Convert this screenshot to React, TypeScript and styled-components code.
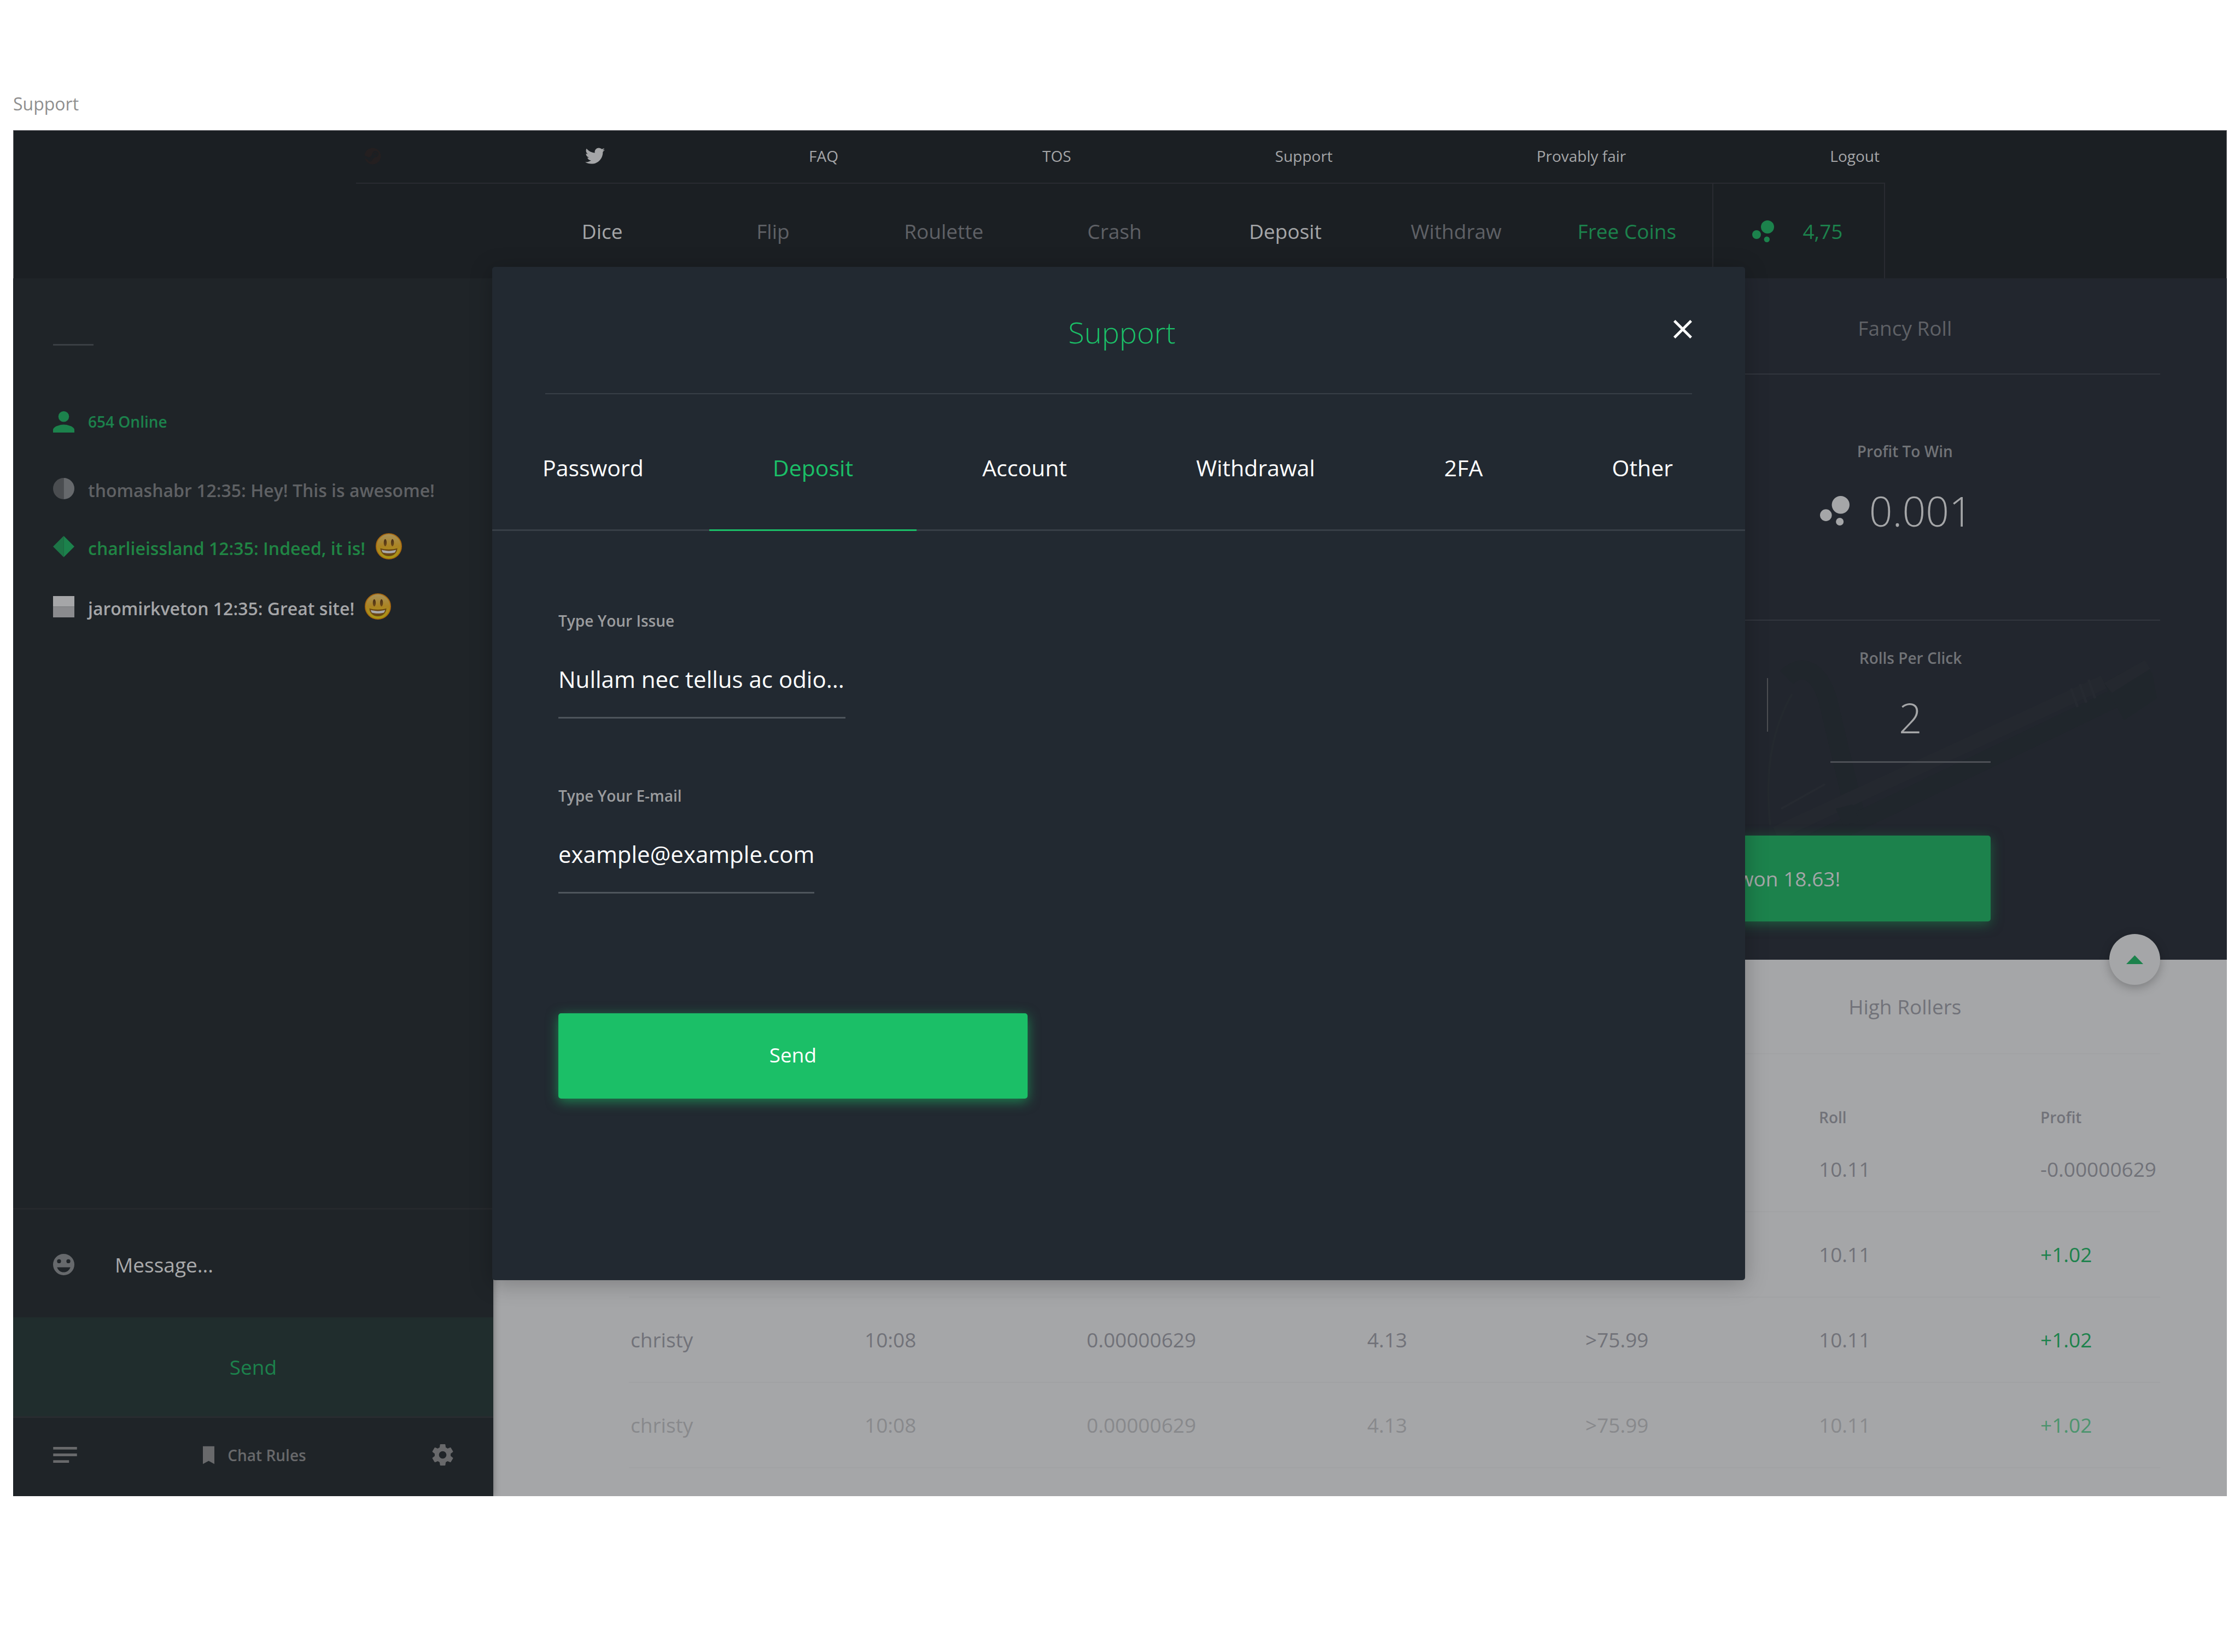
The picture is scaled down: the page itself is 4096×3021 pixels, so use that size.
import React from 'react';
import styled, { createGlobalStyle, css } from 'styled-components';
import { FaSteam, FaTwitter } from 'react-icons/fa';

const color = {
  header: '#1b1f23',
  sidebar: '#1f2428',
  panel: '#22262e',
  light: '#a5a6a8',
  modal: '#222931',
  green: '#1bbf67',
  greenDim: '#1c824c',
  text: '#a5a6a8',
  muted: '#5f6166',
  label: '#717377',
  ink: '#717279',
  line: '#292b31',
  panelLine: '#32363e',
  modalLine: '#383f47',
};

const GlobalStyle = createGlobalStyle`
  *, *::before, *::after { box-sizing: border-box; }
  body {
    margin: 0;
    background: #ffffff;
    font-family: "Open Sans", "Noto Sans", sans-serif;
    font-size: 37px;
    line-height: 50px;
  }
  button, input {
    font: inherit;
    color: inherit;
    margin: 0;
    padding: 0;
    border: 0;
    background: none;
    outline: none;
  }
  button { cursor: pointer; }
  a { color: inherit; text-decoration: none; }
  svg { display: block; flex: none; }
`;

const smallStrong = css`
  font-size: 28px;
  line-height: 36px;
  font-weight: 600;
`;

const Page = styled.div`
  min-height: 100vh;
  padding: 168px 24px 24px;
`;

const PageLabel = styled.p`
  margin: 0 0 26px;
  font-size: 32px;
  line-height: 44px;
  color: #8f8f8f;
`;

const Frame = styled.div`
  position: relative;
  outline: 1px solid #646569;
  outline-offset: -1px;
  background: ${color.light};
`;

/* Header */

const Header = styled.header`
  padding: 0 625px 0 627px;
  background: ${color.header};
`;

const TopLinks = styled.nav`
  display: flex;
  align-items: center;
  justify-content: space-between;
  height: 98px;
  padding: 0 10px 2px 15px;
  border-bottom: 2px solid ${color.line};
  font-size: 28px;
  line-height: 36px;
  color: ${color.text};
`;

const SteamLink = styled.a`
  color: #241f20;
`;

const NavRow = styled.div`
  display: flex;
  height: 173px;
`;

const MainNav = styled.nav`
  flex: 1;
  display: grid;
  grid-template-columns: repeat(7, 1fr);
  align-items: center;
  justify-items: center;
  padding-left: 294px;
`;

const NavLink = styled.a<{ $tone?: 'bright' | 'green' }>`
  color: ${(p) => (p.$tone === 'bright' ? color.text : p.$tone === 'green' ? color.greenDim : color.muted)};
`;

const Balance = styled.div`
  display: flex;
  align-items: center;
  justify-content: center;
  gap: 52px;
  width: 316px;
  padding-right: 4px;
  border: solid ${color.line};
  border-width: 0 2px;
  color: ${color.greenDim};
`;

const Body = styled.div`
  display: flex;
`;

/* Chat */

const Sidebar = styled.aside`
  position: relative;
  z-index: 1;
  flex: none;
  display: flex;
  flex-direction: column;
  width: 878px;
  background: ${color.sidebar};
  box-shadow: 0 0 12px rgba(0, 0, 0, 0.35);
  clip-path: inset(0 -16px 0 0);
`;

const Chat = styled.div`
  flex: 1;
  padding: 120px 73px 0;
`;

const ChatMark = styled.hr`
  width: 74px;
  height: 3px;
  margin: 0 0 119px;
  border: 0;
  background: #3a3f44;
`;

const Online = styled.p`
  ${smallStrong}
  display: flex;
  align-items: center;
  gap: 25px;
  height: 40px;
  margin: 0;
  color: ${color.greenDim};
`;

const Messages = styled.ul`
  display: flex;
  flex-direction: column;
  gap: 62px;
  margin: 0;
  padding: 82px 0 0;
  list-style: none;
`;

const Message = styled.li<{ $color: string }>`
  display: flex;
  align-items: center;
  gap: 19px;
  font-size: 32px;
  line-height: 32px;
  font-weight: 600;
  color: ${(p) => p.$color};
  white-space: nowrap;
`;

const MessageText = styled.span`
  padding: 8px 0 0 6px;
`;

const Compose = styled.div`
  display: flex;
  align-items: center;
  gap: 74px;
  height: 200px;
  padding: 4px 73px 0;
  border-top: 3px solid #26292d;
  color: #66696c;
`;

const ComposeInput = styled.input`
  flex: 1;
  min-width: 0;
  color: #a9aaab;
  &::placeholder {
    color: #a9aaab;
    opacity: 1;
  }
`;

const ChatSend = styled.button`
  height: 184px;
  border-bottom: 3px solid #292c30;
  background: #202d2d;
  color: ${color.greenDim};
`;

const ChatFooter = styled.div`
  display: flex;
  align-items: center;
  justify-content: space-between;
  height: 143px;
  padding: 0 73px 8px;
  color: #68696b;
`;

const RulesLink = styled.a`
  ${smallStrong}
  display: flex;
  align-items: center;
  gap: 24px;
`;

/* Dice panel */

const Main = styled.main`
  flex: 1;
  min-width: 0;
`;

const Panel = styled.section`
  position: relative;
  padding: 0 122px 70px 248px;
  background: ${color.panel};
`;

const Artwork = styled.svg`
  position: absolute;
  right: 85px;
  bottom: 96px;
`;

const ThirdsRow = styled.div`
  position: relative;
  display: grid;
  grid-template-columns: repeat(3, 1fr);
  border-bottom: 2px solid ${color.panelLine};
`;

const ModeTab = styled.button`
  grid-column: 3;
  height: 174px;
  padding-top: 8px;
  color: ${color.muted};
`;

const Stat = styled.div`
  grid-column: 3;
  display: flex;
  flex-direction: column;
  align-items: center;
  gap: 41px;
  height: 448px;
  padding-top: 122px;
`;

const StatLabel = styled.label`
  ${smallStrong}
  color: ${color.label};
`;

const StatTitle = styled.span`
  ${smallStrong}
  color: ${color.label};
`;

const bigNumber = css`
  font-size: 75px;
  line-height: 100px;
  font-weight: 300;
  color: ${color.text};
`;

const StatValue = styled.div`
  ${bigNumber}
  display: flex;
  align-items: center;
  gap: 36px;
  padding-right: 32px;
`;

const Controls = styled.div`
  position: relative;
  display: flex;
  flex-direction: column;
  align-items: flex-end;
  gap: 133px;
  padding-right: 310px;
`;

const RollsRow = styled.div`
  display: flex;
  gap: 114px;
`;

const Divider = styled.div`
  width: 2px;
  height: 98px;
  margin-top: 105px;
  background: #4d4f53;
`;

const RollsField = styled.div`
  display: flex;
  flex-direction: column;
  align-items: center;
  gap: 41px;
  width: 293px;
  padding-top: 50px;
`;

const RollsInput = styled.input`
  ${bigNumber}
  width: 100%;
  height: 133px;
  padding-bottom: 30px;
  border-bottom: 3px solid #4c4f55;
  text-align: center;
`;

const ResultButton = styled.button`
  width: 812px;
  height: 157px;
  border-radius: 5px;
  background: ${color.greenDim};
  box-shadow: 0 5px 22px rgba(28, 130, 76, 0.6);
  color: ${color.text};
`;

/* Results */

const Results = styled.section`
  position: relative;
  padding: 0 122px 51px 248px;
  background: ${color.light};
`;

const ResultsTabs = styled.div`
  display: grid;
  grid-template-columns: repeat(3, 1fr);
  border-bottom: 2px solid #a1a2a4;
`;

const ResultsTab = styled.button`
  grid-column: 3;
  height: 171px;
  color: ${color.ink};
`;

const ScrollTop = styled.button`
  position: absolute;
  top: -47px;
  right: 122px;
  display: grid;
  place-items: center;
  width: 93px;
  height: 93px;
  border-radius: 50%;
  background: ${color.light};
  box-shadow: 0 5px 18px rgba(0, 0, 0, 0.25);
  color: ${color.greenDim};
`;

const Table = styled.table`
  width: 100%;
  border-collapse: separate;
  border-spacing: 0;
  table-layout: fixed;
  color: ${color.ink};
`;

const Th = styled.th`
  ${smallStrong}
  height: 133px;
  padding: 0 0 0 3px;
  text-align: left;
  vertical-align: bottom;
`;

const Row = styled.tr<{ $faded?: boolean }>`
  color: ${(p) => (p.$faded ? '#88898c' : 'inherit')};
`;

const Td = styled.td<{ $win?: boolean; $faded?: boolean }>`
  height: 156px;
  padding: 0 0 0 3px;
  border-bottom: 2px solid #a1a2a4;
  white-space: nowrap;
  ${(p) => p.$win && `color: ${p.$faded ? '#4d946e' : color.greenDim};`}
`;

/* Support dialog */

const Dialog = styled.div`
  position: absolute;
  z-index: 2;
  top: 250px;
  left: 876px;
  right: 881px;
  border-radius: 5px;
  background: ${color.modal};
  box-shadow: 0 6px 40px rgba(0, 0, 0, 0.25);
  color: #ffffff;
`;

const DialogHeader = styled.div`
  position: relative;
  display: flex;
  align-items: center;
  justify-content: center;
  height: 233px;
  margin: 0 97px;
  padding: 6px 0 0 12px;
  border-bottom: 2px solid ${color.modalLine};
`;

const DialogTitle = styled.h2`
  margin: 0;
  font-size: 54px;
  line-height: 72px;
  font-weight: 300;
  color: ${color.green};
`;

const CloseButton = styled.button`
  position: absolute;
  top: 97px;
  right: 0;
`;

const Tabs = styled.div`
  display: flex;
  justify-content: space-between;
  height: 250px;
  padding: 0 132px 0 92px;
  border-bottom: 3px solid ${color.modalLine};
  font-size: 41px;
`;

const Tab = styled.button<{ $active?: boolean }>`
  position: relative;
  padding-top: 20px;
  ${(p) =>
    p.$active &&
    css`
      color: ${color.green};
      &::after {
        content: '';
        position: absolute;
        left: -116px;
        right: -116px;
        bottom: -3px;
        height: 3px;
        background: ${color.green};
      }
    `}
`;

const Form = styled.form`
  display: flex;
  flex-direction: column;
  align-items: flex-start;
  gap: 123px;
  padding: 146px 121px 332px;
`;

const Field = styled.div`
  display: flex;
  flex-direction: column;
  gap: 19px;
`;

const FieldLabel = styled.label`
  ${smallStrong}
  color: #9b9c9e;
`;

const FieldInput = styled.input<{ $width: number }>`
  width: ${(p) => p.$width}px;
  height: 142px;
  border-bottom: 3px solid #4e555c;
  font-size: 42px;
`;

const SubmitButton = styled.button`
  width: 858px;
  height: 156px;
  margin-top: 96px;
  padding-bottom: 4px;
  border-radius: 5px;
  background: ${color.green};
  box-shadow: 0 5px 22px rgba(27, 191, 103, 0.6);
`;

/* Drawings */

const Bubbles = ({ size }: { size: number }) => (
  <svg width={size} height={size} viewBox="0 0 100 100" fill="currentColor" aria-hidden>
    <circle cx="70" cy="30" r="30" />
    <circle cx="20" cy="65" r="20" />
    <circle cx="67" cy="87" r="13" />
  </svg>
);

const PersonIcon = () => (
  <svg width="39" height="39" viewBox="0 0 64 64" fill="currentColor" aria-hidden>
    <circle cx="32" cy="16" r="16" />
    <path d="M0 64V56C0 45.400 21.300 40 32 40s32 5.400 32 16v8z" />
  </svg>
);

const HalfCircle = () => (
  <svg width="39" height="39" viewBox="0 0 64 64" aria-hidden>
    <path d="M32 0a32 32 0 0 0 0 64z" fill="#4a4d50" />
    <path d="M32 0a32 32 0 0 1 0 64z" fill="#66696c" />
  </svg>
);

const Diamond = () => (
  <svg width="39" height="39" viewBox="0 0 64 64" aria-hidden>
    <path d="M32 0L0 32l32 32z" fill="#1d7446" />
    <path d="M32 0l32 32-32 32z" fill="#1c824c" />
  </svg>
);

const Square = () => (
  <svg width="39" height="39" viewBox="0 0 64 64" aria-hidden>
    <path d="M0 0h64v32H0z" fill="#a5a6a8" />
    <path d="M0 32h64v32H0z" fill="#8a8b8e" />
  </svg>
);

const Emoji = () => (
  <svg width="48" height="48" viewBox="0 0 80 80" aria-hidden>
    <defs>
      <linearGradient id="face" x1="0" y1="0" x2="0" y2="1">
        <stop offset="0" stopColor="#a8925a" />
        <stop offset="0.5" stopColor="#ab8322" />
        <stop offset="1" stopColor="#a89a14" />
      </linearGradient>
      <linearGradient id="eye" x1="0" y1="0" x2="0" y2="1">
        <stop offset="0" stopColor="#4a3018" />
        <stop offset="1" stopColor="#6e4a17" />
      </linearGradient>
    </defs>
    <circle cx="40" cy="40" r="38.500" fill="url(#face)" stroke="#a8680f" strokeWidth="3" />
    <ellipse cx="29" cy="29" rx="4.500" ry="11" fill="url(#eye)" />
    <ellipse cx="51" cy="29" rx="4.500" ry="11" fill="url(#eye)" />
    <path d="M14 46c16 5 36 5 52 0-1 15-11 24-26 24S15 61 14 46z" fill="#6b4714" />
    <path d="M18 51c14 4 30 4 44 0-1 4-2 6-4 8-11 3-25 3-36 0-2-2-3-4-4-8z" fill="#a9a9aa" />
  </svg>
);

const SmileIcon = () => (
  <svg width="39" height="39" viewBox="0 0 64 64" fill="currentColor" aria-hidden>
    <path
      fillRule="evenodd"
      d="M32 0a32 32 0 1 1 0 64 32 32 0 0 1 0-64zM18 16a6 6 0 1 0 0 12 6 6 0 0 0 0-12zm28 0a6 6 0 1 0 0 12 6 6 0 0 0 0-12zM12 40c3 9 11 15 20 15s17-6 20-15z"
    />
  </svg>
);

const MenuIcon = () => (
  <svg width="44" height="29" viewBox="0 0 72 48" fill="currentColor" aria-hidden>
    <path d="M0 0h72v8H0zM0 20h72v8H0zM0 40h48v8H0z" />
  </svg>
);

const BookmarkIcon = () => (
  <svg width="21" height="34" viewBox="0 0 36 56" fill="currentColor" aria-hidden>
    <path d="M0 0h36v56L18 46 0 56z" />
  </svg>
);

const GearIcon = () => (
  <svg width="39" height="39" viewBox="2 2 20 20" fill="currentColor" aria-hidden>
    <path d="M19.430 12.980c.04-.32.07-.64.07-.98s-.03-.66-.07-.98l2.110-1.650c.19-.15.24-.42.12-.64l-2-3.460c-.12-.22-.39-.3-.61-.22l-2.490 1c-.52-.4-1.080-.73-1.690-.98l-.38-2.650C14.460 2.180 14.250 2 14 2h-4c-.25 0-.46.18-.49.42l-.38 2.650c-.61.25-1.170.59-1.690.98l-2.490-1c-.23-.09-.49 0-.61.22l-2 3.460c-.13.22-.07.49.12.64l2.110 1.650c-.04.32-.07.65-.07.98s.03.66.07.98l-2.110 1.650c-.19.15-.24.42-.12.64l2 3.460c.12.22.39.3.61.22l2.490-1c.52.4 1.080.73 1.690.98l.38 2.650c.03.24.24.42.49.42h4c.25 0 .46-.18.49-.42l.38-2.650c.61-.25 1.170-.59 1.690-.98l2.490 1c.23.09.49 0 .61-.22l2-3.460c.12-.22.07-.49-.12-.64l-2.110-1.650zM12 15.500c-1.930 0-3.500-1.570-3.500-3.500s1.570-3.500 3.500-3.500 3.500 1.570 3.500 3.500-1.570 3.500-3.500 3.500z" />
  </svg>
);

const CloseIcon = () => (
  <svg width="34" height="34" viewBox="0 0 56 56" fill="currentColor" aria-hidden>
    <path d="M56 5.600L50.400 0 28 22.400 5.600 0 0 5.600 22.400 28 0 50.400 5.600 56 28 33.600 50.400 56 56 50.400 33.600 28z" />
  </svg>
);

const ArrowUp = () => (
  <svg width="31" height="16" viewBox="0 0 31 16" fill="currentColor" aria-hidden>
    <path d="M15.500 0L31 16H0z" />
  </svg>
);

const Sword = () => (
  <Artwork width="780" height="480" viewBox="0 0 780 480" fill="none" aria-hidden>
    <path d="M60 60c30-30 60-10 75 40l55 230" stroke="#20262c" strokeWidth="34" />
    <path d="M30 330c-10-90 0-170 40-240" stroke="#24292f" strokeWidth="4" />
    <path d="M50 300l80-45" stroke="#262a31" strokeWidth="4" />
    <path d="M40 345L640 68" stroke="#24282f" strokeWidth="26" />
    <path d="M60 385L660 98" stroke="#20262c" strokeWidth="34" />
    <path d="M640 70l75-42 14 26 8 44-60 40z" fill="#20262c" />
    <path d="M640 70l75-42 10 16-70 44z" fill="#24282f" />
    <path d="M150 300l30-8 14 30-30 10zM170 380l60-10 12 40-40 34-36-10z" fill="#20262c" />
    <path d="M580 80l12 34M596 72l12 34M612 64l12 34" stroke="#262a31" strokeWidth="5" />
  </Artwork>
);

const columns = [
  { title: 'User', width: 428 },
  { title: 'Time', width: 406 },
  { title: 'Bet', width: 513 },
  { title: 'Multiplier', width: 399 },
  { title: 'Game', width: 427 },
  { title: 'Roll', width: 405 },
  { title: 'Profit', width: 222 },
];

const rows = [
  { profit: '-0.00000629' },
  { profit: '+1.02' },
  { profit: '+1.02' },
  { profit: '+1.02', faded: true },
];

const tabs = ['Password', 'Deposit', 'Account', 'Withdrawal', '2FA', 'Other'];

export default function App() {
  return (
    <>
      <GlobalStyle />
      <Page>
        <PageLabel>Support</PageLabel>
        <Frame>
          <Header>
            <TopLinks>
              <SteamLink href="#" aria-label="Steam">
                <FaSteam size={31} />
              </SteamLink>
              <a href="#" aria-label="Twitter">
                <FaTwitter size={36} />
              </a>
              <a href="#">FAQ</a>
              <a href="#">TOS</a>
              <a href="#">Support</a>
              <a href="#">Provably fair</a>
              <a href="#">Logout</a>
            </TopLinks>
            <NavRow>
              <MainNav>
                <NavLink href="#" $tone="bright">Dice</NavLink>
                <NavLink href="#">Flip</NavLink>
                <NavLink href="#">Roulette</NavLink>
                <NavLink href="#">Crash</NavLink>
                <NavLink href="#" $tone="bright">Deposit</NavLink>
                <NavLink href="#">Withdraw</NavLink>
                <NavLink href="#" $tone="green">Free Coins</NavLink>
              </MainNav>
              <Balance>
                <Bubbles size={40} />
                <span>4,75</span>
              </Balance>
            </NavRow>
          </Header>

          <Body>
            <Sidebar>
              <Chat>
                <ChatMark />
                <Online>
                  <PersonIcon />
                  654 Online
                </Online>
                <Messages>
                  <Message $color="#5f6164">
                    <HalfCircle />
                    <MessageText>thomashabr 12:35: Hey! This is awesome!</MessageText>
                  </Message>
                  <Message $color="#208544">
                    <Diamond />
                    <MessageText>charlieissland 12:35: Indeed, it is!</MessageText>
                    <Emoji />
                  </Message>
                  <Message $color={color.text}>
                    <Square />
                    <MessageText>jaromirkveton 12:35: Great site!</MessageText>
                    <Emoji />
                  </Message>
                </Messages>
              </Chat>
              <Compose>
                <SmileIcon />
                <ComposeInput aria-label="Message" placeholder="Message..." />
              </Compose>
              <ChatSend type="button">Send</ChatSend>
              <ChatFooter>
                <button type="button" aria-label="Menu">
                  <MenuIcon />
                </button>
                <RulesLink href="#">
                  <BookmarkIcon />
                  Chat Rules
                </RulesLink>
                <button type="button" aria-label="Settings">
                  <GearIcon />
                </button>
              </ChatFooter>
            </Sidebar>

            <Main>
              <Panel>
                <Sword />
                <ThirdsRow>
                  <ModeTab type="button">Fancy Roll</ModeTab>
                </ThirdsRow>
                <ThirdsRow>
                  <Stat>
                    <StatTitle>Profit To Win</StatTitle>
                    <StatValue>
                      <Bubbles size={54} />
                      <span>0.001</span>
                    </StatValue>
                  </Stat>
                </ThirdsRow>
                <Controls>
                  <RollsRow>
                    <Divider />
                    <RollsField>
                      <StatLabel htmlFor="rolls">Rolls Per Click</StatLabel>
                      <RollsInput id="rolls" defaultValue="2" />
                    </RollsField>
                  </RollsRow>
                  <ResultButton type="button">You won 18.63!</ResultButton>
                </Controls>
              </Panel>

              <Results>
                <ScrollTop type="button" aria-label="Collapse">
                  <ArrowUp />
                </ScrollTop>
                <ResultsTabs>
                  <ResultsTab type="button">High Rollers</ResultsTab>
                </ResultsTabs>
                <Table>
                  <colgroup>
                    {columns.map((c) => (
                      <col key={c.title} style={{ width: `${(c.width / 2800) * 100}%` }} />
                    ))}
                  </colgroup>
                  <thead>
                    <tr>
                      {columns.map((c) => (
                        <Th key={c.title}>{c.title}</Th>
                      ))}
                    </tr>
                  </thead>
                  <tbody>
                    {rows.map((r, i) => (
                      <Row key={i} $faded={r.faded}>
                        <Td>christy</Td>
                        <Td>10:08</Td>
                        <Td>0.00000629</Td>
                        <Td>4.13</Td>
                        <Td>&gt;75.99</Td>
                        <Td>10.11</Td>
                        <Td $win={r.profit.startsWith('+')} $faded={r.faded}>
                          {r.profit}
                        </Td>
                      </Row>
                    ))}
                  </tbody>
                </Table>
              </Results>
            </Main>
          </Body>

          <Dialog role="dialog" aria-label="Support">
            <DialogHeader>
              <DialogTitle>Support</DialogTitle>
              <CloseButton type="button" aria-label="Close">
                <CloseIcon />
              </CloseButton>
            </DialogHeader>
            <Tabs role="tablist">
              {tabs.map((t) => (
                <Tab key={t} type="button" role="tab" aria-selected={t === 'Deposit'} $active={t === 'Deposit'}>
                  {t}
                </Tab>
              ))}
            </Tabs>
            <Form>
              <Field>
                <FieldLabel htmlFor="issue">Type Your Issue</FieldLabel>
                <FieldInput id="issue" $width={525} defaultValue="Nullam nec tellus ac odio..." />
              </Field>
              <Field>
                <FieldLabel htmlFor="email">Type Your E-mail</FieldLabel>
                <FieldInput id="email" type="email" $width={468} defaultValue="example@example.com" />
              </Field>
              <SubmitButton type="button">Send</SubmitButton>
            </Form>
          </Dialog>
        </Frame>
      </Page>
    </>
  );
}
